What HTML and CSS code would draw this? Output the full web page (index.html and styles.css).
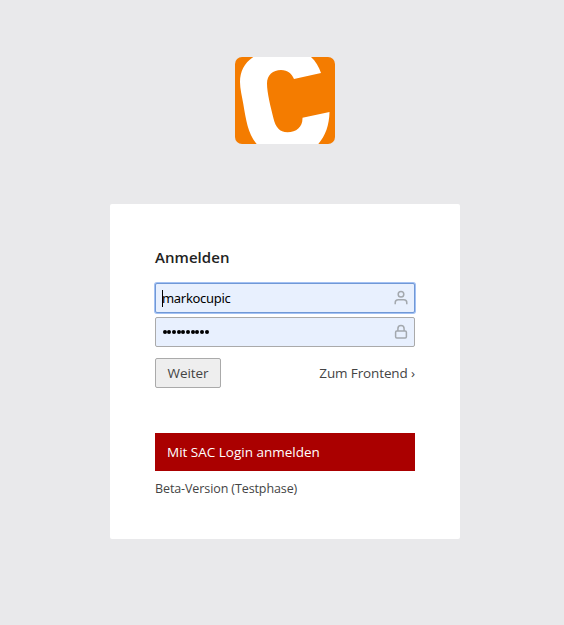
FILE: index.html
```html
<!DOCTYPE html>
<html lang="de">
<head>
<meta charset="utf-8">
<title>Anmelden</title>
<link rel="stylesheet" href="styles.css">
</head>
<body>
<header class="logo">
<svg width="100" height="87" viewBox="0 0 100 87" aria-hidden="true">
<rect width="100" height="87" rx="7" fill="#f47c00"/>
<path fill="#fff" d="M18.3 0C9 6 5 15 5 25c0 7 2 14 3.300 22C11 63 13 77 21.700 87h61.600c7-8 11-19 11.200-32l-27 5.700c.3 9.300-6 14.600-15 14.600-8 0-12-5.300-14-13.800C35.500 49.500 32 36 32 26.500 32 18 38 13 46 13c7 0 10.500 3.500 13 9l27-6c-2-6-5.500-12-10-16Z"/>
</svg>
</header>
<main class="card">
<h1 class="title">Anmelden</h1>
<form class="form">
<div class="field focused"><span class="caret"></span><span class="username">markocupic</span>
<svg class="icon" width="14" height="16" viewBox="0 0 14 16"><circle cx="7" cy="4.300" r="2.800"/><path d="M1.200 14.200v-1.500c0-2 1.300-3 3-3h5.600c1.700 0 3 1 3 3v1.500"/></svg>
</div>
<div class="field"><span class="dots"><i></i><i></i><i></i><i></i><i></i><i></i><i></i><i></i><i></i><i></i></span>
<svg class="icon" width="14" height="16" viewBox="0 0 14 16"><rect x="1.600" y="7.100" width="10.800" height="6.800" rx="1.200"/><path d="M3.900 7V4.700a3.100 3.100 0 0 1 6.200 0V7"/></svg>
</div>
<div class="actions"><button class="submit" type="button"><span>Weiter</span></button><a class="frontend">Zum Frontend ›</a></div>
</form>
<a class="sac"><span>Mit SAC Login anmelden</span></a>
<p class="note"><span>Beta-Version (Testphase)</span></p>
</main>
</body>
</html>
```
FILE: styles.css
```css
* { box-sizing: border-box; }
body { margin: 0; min-height: 625px; background: #e9e9eb; color: #444; font: 14px/20px "Open Sans", sans-serif; }
.logo { display: flex; justify-content: center; padding: 57px 0 60px; }
.logo svg { display: block; margin-left: 6px; }
.card { width: 350px; height: 335px; margin: 0 0 0 110px; padding: 43px 45px 0; background: #fff; border-radius: 2px; }
.title { margin: 0 0 16px; font-size: 15px; line-height: 20px; font-weight: 600; color: #222; letter-spacing: .05px; }
.field { display: flex; align-items: center; height: 30px; margin-bottom: 4px; padding: 0 6px; border: 1px solid #aaa; border-radius: 2px; background: #e8f0fe; }
.focused { border-color: #7098d6; box-shadow: 0 0 0 1px #a3c1f3; }
.caret { width: 1px; height: 17px; background: #000; }
.username { color: #000; font: 13px/20px "Noto Sans", sans-serif; letter-spacing: -.3px; margin-left: -1px; }
.dots { display: flex; gap: .7px; padding-left: .5px; }
.dots i { width: 4px; height: 4px; border-radius: 50%; background: #000; }
.icon { margin-left: auto; fill: none; stroke: #a3a8ae; stroke-width: 1.5; }
.actions { display: flex; justify-content: space-between; align-items: center; margin-top: 11px; }
.submit { width: 66px; height: 30px; padding: 0; border: 1px solid #aaa; border-radius: 2px; background: #eee; color: #444; font: 13.5px/20px "Open Sans", sans-serif; letter-spacing: -.1px; }
.frontend { font-size: 13.5px; letter-spacing: -.12px; }
.sac { display: flex; align-items: center; height: 38px; margin-top: 45px; padding-left: 12px; background: #a00; color: #fff; font-size: 13.5px; }
.note { margin: 8px 0 0; font-size: 12.5px; line-height: 20px; letter-spacing: -.1px; }
```
